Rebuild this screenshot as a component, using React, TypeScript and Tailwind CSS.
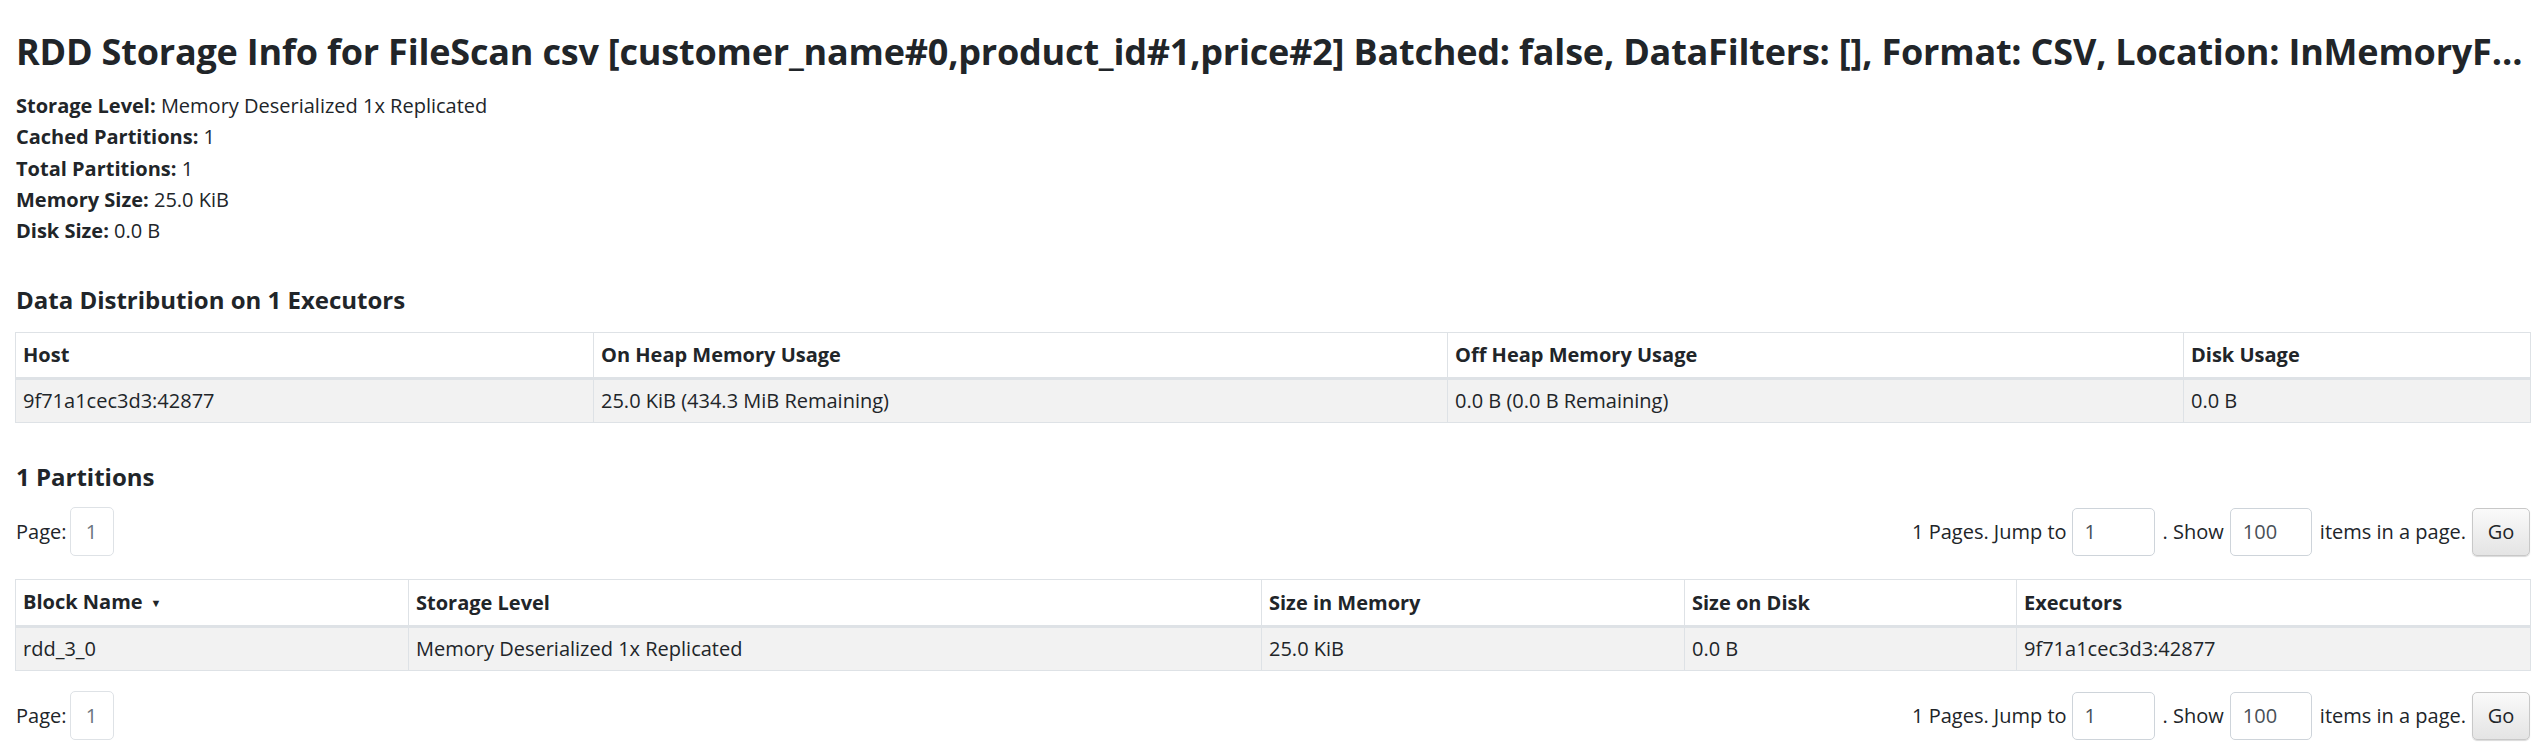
import React from 'react';

const info: [string, string][] = [
  ['Storage Level:', 'Memory Deserialized 1x Replicated'],
  ['Cached Partitions:', '1'],
  ['Total Partitions:', '1'],
  ['Memory Size:', '25.0 KiB'],
  ['Disk Size:', '0.0 B'],
];

function Pager() {
  return (
    <div className="flex items-center justify-between h-[49px]">
      <div className="flex items-center">
        <span className="leading-[30px]">Page:</span>
        <span className="ml-[3px] w-[44px] h-[49px] flex items-center justify-center border border-[#dee2e6] rounded-[5px] text-[#6c757d]">
          1
        </span>
      </div>
      <div className="flex items-center">
        <span>1 Pages. Jump to</span>
        <span className="ml-[5px] w-[83px] h-[48px] border border-[#ced4da] rounded-[5px] flex items-center pl-[12px] text-[#495057]">1</span>
        <span className="ml-[8px]">. Show</span>
        <span className="ml-[6px] w-[82px] h-[48px] border border-[#ced4da] rounded-[5px] flex items-center pl-[12px] text-[#495057]">100</span>
        <span className="ml-[8px]">items in a page.</span>
        <span className="ml-[6px] w-[58px] h-[48px] border border-[#c8c8c8] rounded-[5px] flex items-center justify-center bg-linear-to-b from-[#fafafa] to-[#e4e4e4] shadow-[0_1px_1px_rgba(0,0,0,0.15)]">
          Go
        </span>
      </div>
    </div>
  );
}

function DataTable({ cols, widths, rows }: { cols: string[]; widths: string[]; rows: string[][] }) {
  return (
    <table className="w-full table-fixed border-collapse">
      <colgroup>
        {widths.map((w, i) => (
          <col key={i} className={w} />
        ))}
      </colgroup>
      <thead>
        <tr>
          {cols.map((c, i) => (
            <th
              key={c}
              className="text-left font-bold border border-[#dee2e6] border-b-[3px] px-[7px] py-[7px] leading-[30px]"
            >
              {c}
              {i === 0 && cols[0] === 'Block Name' && <span className="ml-[8px] text-[11px] align-[2px]">▼</span>}
            </th>
          ))}
        </tr>
      </thead>
      <tbody>
        {rows.map((r, ri) => (
          <tr key={ri} className="bg-[#f2f2f2]">
            {r.map((v, i) => (
              <td key={i} className="border border-[#dee2e6] px-[7px] py-[6px] leading-[30px]">
                {v}
              </td>
            ))}
          </tr>
        ))}
      </tbody>
    </table>
  );
}

export default function App() {
  return (
    <div className="w-[2539px] h-[748px] bg-white text-[#212529] font-['Open_Sans',sans-serif] text-[20px] pl-[15px] pr-[9px] overflow-hidden">
      <h3 className="pt-[30px] h-[74px] leading-[44px] text-[36px] font-bold whitespace-nowrap overflow-hidden text-ellipsis pl-[1px] tracking-[-0.2px]">
        RDD Storage Info for FileScan csv [customer_name#0,product_id#1,price#2] Batched: false, DataFilters: [], Format: CSV, Location: InMemoryFileIndex(1 paths)[file:/data/sales.csv], PartitionFilters: [], PushedFilters: [], ReadSchema: struct&lt;customer_name:string,product_id:string,price:double&gt;
      </h3>
      <ul className="mt-[16px] pl-[1px]">
        {info.map(([k, v]) => (
          <li key={k} className="leading-[31.3px]">
            <strong className="font-bold">{k}</strong> {v}
          </li>
        ))}
      </ul>

      <h4 className="mt-[39px] leading-[30px] text-[24px] font-bold pl-[1px]">Data Distribution on 1 Executors</h4>
      <div className="mt-[17px]">
        <DataTable
          cols={['Host', 'On Heap Memory Usage', 'Off Heap Memory Usage', 'Disk Usage']}
          widths={['w-[578px]', 'w-[854px]', 'w-[736px]', 'w-[347px]']}
          rows={[['9f71a1cec3d3:42877', '25.0 KiB (434.3 MiB Remaining)', '0.0 B (0.0 B Remaining)', '0.0 B']]}
        />
      </div>

      <h4 className="mt-[39px] leading-[30px] text-[24px] font-bold pl-[1px]">1 Partitions</h4>
      <div className="mt-[15px] pl-[1px]">
        <Pager />
      </div>
      <div className="mt-[23px]">
        <DataTable
          cols={['Block Name', 'Storage Level', 'Size in Memory', 'Size on Disk', 'Executors']}
          widths={['w-[393px]', 'w-[853px]', 'w-[423px]', 'w-[332px]', 'w-[514px]']}
          rows={[['rdd_3_0', 'Memory Deserialized 1x Replicated', '25.0 KiB', '0.0 B', '9f71a1cec3d3:42877']]}
        />
      </div>
      <div className="mt-[20px] pl-[1px]">
        <Pager />
      </div>
    </div>
  );
}
